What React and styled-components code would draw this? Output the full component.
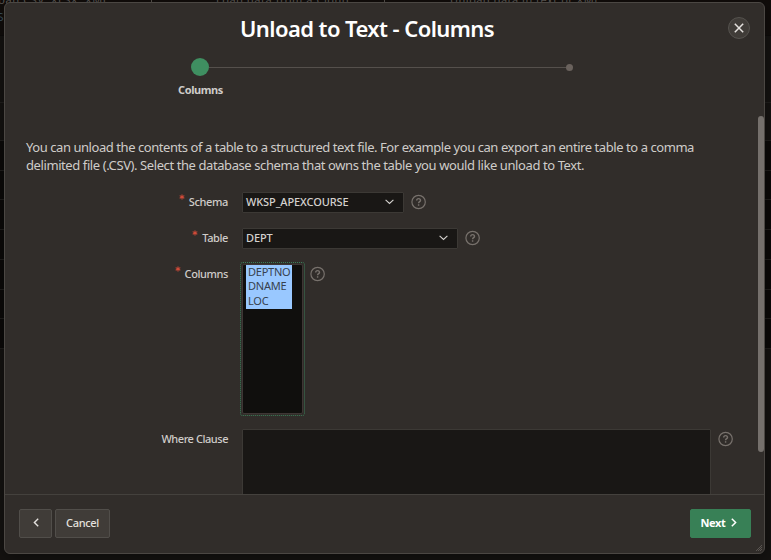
import React from "react";
import styled, { createGlobalStyle } from "styled-components";

const Global = createGlobalStyle`
  * { box-sizing: border-box; }
  html, body { margin: 0; padding: 0; overflow: hidden; }
  body { background: #141210; color: #cfccc9; font-family: "Noto Sans", "Open Sans", sans-serif; font-size: 11px; }
`;

const Screen = styled.div`
  position: relative;
  width: 771px;
  height: 560px;
  overflow: hidden;
  background: #151311;
`;

const Backdrop = styled.div`
  display: flex;
  flex-direction: column;
  height: 560px;
`;

const Cards = styled.div`
  display: grid;
  grid-template-columns: 152px 233px 223px 1fr;
  height: 36px;
  background: #110d0b;
  border-bottom: 1px solid #0d0b0a;
`;

const Card = styled.div`
  height: 36px;
  padding-left: ${(p) => p.$pad}px;
  margin-left: ${(p) => p.$shift || 0}px;
  border-right: ${(p) => (p.$last ? 0 : 1)}px solid #57524d;
  color: #5f5b57;
  font-size: 11px;
  line-height: 17px;
  letter-spacing: ${(p) => p.$ls || 0}px;
  white-space: nowrap;
`;

const CardTitle = styled.div`
  margin-top: -9px;
`;

const CardLink = styled.div`
  padding-left: 2px;
  color: #3c5361;
`;

const BackRow = styled.div`
  height: ${(p) => p.$h}px;
  background: ${(p) => (p.$dark ? "#0c0a09" : "#151311")};
  border-bottom: 1px solid #211f1d;
`;

const Dialog = styled.section`
  position: absolute;
  left: 4px;
  top: 2px;
  width: 761px;
  height: 552px;
  display: flex;
  flex-direction: column;
  background: #312d2a;
  border: 1px solid #4b4743;
  border-radius: 6px;
  overflow: hidden;
  box-shadow: 0 4px 16px rgba(0, 0, 0, 0.4);
`;

const Header = styled.header`
  display: grid;
  grid-template-columns: 1fr 40px;
  align-items: center;
  height: 50px;
  padding: 0 9px 0 5px;
`;

const Title = styled.h1`
  margin: 0 0 1px 9px;
  color: #fff;
  font-size: 22px;
  font-weight: 600;
  line-height: 30px;
  letter-spacing: -0.57px;
  text-align: center;
  white-space: nowrap;
`;

const Close = styled.button`
  justify-self: end;
  display: grid;
  place-items: center;
  width: 22px;
  height: 22px;
  margin-right: 5px;
  padding: 0;
  border: 1px solid #55524e;
  border-radius: 50%;
  background: #403c38;
  color: #e4e1de;
`;

const Wizard = styled.div`
  display: grid;
  grid-template-columns: 18px 357px 7px;
  align-items: center;
  height: 26px;
  margin: 1px 0 0 186px;
`;

const StepDot = styled.span`
  width: ${(p) => (p.$current ? 18 : 7)}px;
  height: ${(p) => (p.$current ? 18 : 7)}px;
  border-radius: 50%;
  background: ${(p) => (p.$current ? "#3f8f61" : "#6a625d")};
`;

const StepLine = styled.span`
  height: 1px;
  background: #55504c;
`;

const StepLabel = styled.div`
  width: 60px;
  margin: 2px 0 0 165.5px;
  color: #cfccc9;
  font-size: 11px;
  font-weight: 700;
  line-height: 16px;
  letter-spacing: -0.4px;
  text-align: center;
`;

const Body = styled.div`
  display: flex;
  flex: 1;
  min-height: 0;
  margin-top: 18px;
  overflow: hidden;
`;

const Content = styled.div`
  width: 753px;
  padding-top: 22px;
`;

const Intro = styled.p`
  margin: 0 0 18px 21px;
  color: #cfccc9;
  font-size: 13px;
  line-height: 18px;
  white-space: nowrap;
`;

const IntroLine = styled.span`
  display: block;
  letter-spacing: ${(p) => p.$ls}px;
`;

const Track = styled.div`
  width: 6px;
`;

const Thumb = styled.div`
  width: 6px;
  height: 336px;
  border-radius: 3px;
  background: #75706c;
`;

const Field = styled.div`
  display: grid;
  grid-template-columns: 223px auto 1fr;
  align-items: start;
  height: ${(p) => p.$h}px;
`;

const Label = styled.label`
  display: flex;
  justify-content: flex-end;
  margin-top: 2px;
  color: #cfccc9;
  font-size: 11px;
  font-weight: 500;
  line-height: 16px;
  letter-spacing: ${(p) => p.$ls}px;
`;

const Star = styled.svg`
  width: 6px;
  height: 6px;
  margin: 0 4px 0 0;
`;

const Select = styled.div`
  display: flex;
  align-items: center;
  justify-content: space-between;
  width: ${(p) => p.$w}px;
  height: 21px;
  margin-left: 14px;
  padding: 0 9px 2px 3px;
  border: 1px solid #3c3935;
  border-radius: 1px;
  background: #191715;
  color: #d4d1ce;
  font-size: 11px;
  font-weight: 500;
  line-height: 17px;
  letter-spacing: ${(p) => p.$ls}px;
`;

const ListBox = styled.div`
  width: 65px;
  height: 154px;
  margin: -2px 0 0 12px;
  padding: 1px;
  border: 1px dotted #3a7d57;
  border-radius: 3px;
`;

const ListInner = styled.div`
  height: 150px;
  padding: 0 0 0 3px;
  border: 1px solid #3e3634;
  border-radius: 2px;
  background: #100f0d;
`;

const Option = styled.div`
  width: 46px;
  height: ${(p) => p.$h}px;
  padding-left: 2px;
  background: #99c8ff;
  color: #37424e;
  font-size: 11px;
  line-height: 14px;
  letter-spacing: ${(p) => p.$ls}px;
`;

const TextArea = styled.div`
  width: 469px;
  height: 90px;
  margin-left: 14px;
  border: 1px solid #3c3935;
  border-radius: 1px;
  background: #191715;
`;

const HelpIcon = styled.svg`
  width: 16px;
  height: 16px;
  margin: 2px 0 0 ${(p) => p.$left || 7}px;
`;

const Footer = styled.footer`
  display: flex;
  align-items: flex-start;
  gap: 3px;
  height: 59px;
  padding: 14px 13px 0 14px;
  border-top: 1px solid #44413d;
`;

const Button = styled.button`
  display: flex;
  align-items: center;
  justify-content: center;
  gap: 5px;
  width: ${(p) => p.$w}px;
  height: 29px;
  margin: 0 0 0 ${(p) => (p.$primary ? "auto" : "0")};
  padding: 0 ${(p) => (p.$primary ? 4 : 0)}px 2px 0;
  border: 1px solid ${(p) => (p.$primary ? "#388056" : "#514e4a")};
  border-radius: 2px;
  background: ${(p) => (p.$primary ? "#388056" : "#403c38")};
  color: ${(p) => (p.$primary ? "#fff" : "#e4e1de")};
  font-family: inherit;
  font-size: 11px;
  font-weight: ${(p) => (p.$primary ? 700 : 500)};
  letter-spacing: -0.35px;
`;

const Grip = styled.svg`
  position: absolute;
  right: 2px;
  bottom: 2px;
  width: 6px;
  height: 6px;
`;

function Help(props) {
  return (
    <HelpIcon viewBox="0 0 16 16" fill="none" stroke="#77716c" {...props}>
      <circle cx="7.6" cy="8" r="6.7" strokeWidth="1.2" />
      <path d="M5.7 6.6C5.7 5.3 6.4 4.6 7.6 4.6s1.9.7 1.9 1.8c0 1.3-1.9 1.3-1.9 2.8" strokeWidth="1.4" />
      <path d="M7.6 10.2v1.5" strokeWidth="1.4" />
    </HelpIcon>
  );
}

function Required() {
  return (
    <Star viewBox="0 0 6 6" stroke="#cf4a38" strokeWidth="1.1">
      <path d="M3 .5v5M.7 1.6l4.6 2.7M.7 4.3l4.6-2.7" />
    </Star>
  );
}

function Chevron({ d, w, h, width = 1.1 }) {
  return (
    <svg width={w} height={h} viewBox={`0 0 ${w} ${h}`} fill="none" stroke="currentColor" strokeWidth={width}>
      <path d={d} />
    </svg>
  );
}

const down = "M.6 .8L4.5 4.5L8.4 .8";

export default function App() {
  return (
    <Screen>
      <Global />
      <Backdrop>
        <Cards>
          <Card $pad={0} $shift={-8} $ls={0.6}>
            <CardTitle>Load CSV, XLSX, XML</CardTitle>
            <CardLink>JSON</CardLink>
          </Card>
          <Card $pad={64} $ls={0.55}><CardTitle>Load data from a Cloud</CardTitle></Card>
          <Card $pad={65} $ls={0.5} $last><CardTitle>Unload data in text or XML</CardTitle></Card>
        </Cards>
        <BackRow $h={67} />
        <BackRow $h={38} />
        <BackRow $h={30} $dark />
        <BackRow $h={29} $dark />
        <BackRow $h={30} $dark />
        <BackRow $h={30} $dark />
        <BackRow $h={30} $dark />
        <BackRow $h={29} $dark />
        <BackRow $h={30} $dark />
      </Backdrop>
      <Dialog>
        <Header>
          <Title>Unload to Text - Columns</Title>
          <Close aria-label="Close">
            <Chevron d="M.8 .8L9.2 9.2M9.2 .8L.8 9.2" w={10} h={10} width={1.5} />
          </Close>
        </Header>
        <Wizard>
          <StepDot $current />
          <StepLine />
          <StepDot />
        </Wizard>
        <StepLabel>Columns</StepLabel>
        <Body>
          <Content>
            <Intro>
              <IntroLine $ls={-0.44}>You can unload the contents of a table to a structured text file. For example you can export an entire table to a comma</IntroLine>
              <IntroLine $ls={-0.41}>delimited file (.CSV). Select the database schema that owns the table you would like unload to Text.</IntroLine>
            </Intro>
            <Field $h={36}>
              <Label $ls={-0.35}><Required />Schema</Label>
              <Select $w={162} $ls={-0.1}>WKSP_APEXCOURSE<Chevron d={down} w={9} h={6} /></Select>
              <Help />
            </Field>
            <Field $h={36}>
              <Label $ls={-0.4}><Required />Table</Label>
              <Select $w={216} $ls={-0.1}>DEPT<Chevron d={down} w={9} h={6} /></Select>
              <Help />
            </Field>
            <Field $h={165}>
              <Label $ls={-0.4}><Required />Columns</Label>
              <ListBox>
                <ListInner>
                  <Option $h={14} $ls={-0.25}>DEPTNO</Option>
                  <Option $h={15} $ls={-0.2}>DNAME</Option>
                  <Option $h={15} $ls={-0.2}>LOC</Option>
                </ListInner>
              </ListBox>
              <Help $left={5} />
            </Field>
            <Field $h={90}>
              <Label $ls={-0.45}>Where Clause</Label>
              <TextArea />
              <Help />
            </Field>
          </Content>
          <Track><Thumb /></Track>
        </Body>
        <Footer>
          <Button $w={33} aria-label="Back"><Chevron d="M5.2 .8L1.4 4.5L5.2 8.2" w={6} h={9} width={1.4} /></Button>
          <Button $w={55}>Cancel</Button>
          <Button $w={61} $primary>Next<Chevron d="M.8 .8L4.6 4.5L.8 8.2" w={6} h={9} width={1.5} /></Button>
        </Footer>
        <Grip viewBox="0 0 6 6" stroke="#77716c" strokeWidth=".6"><path d="M0 6L6 0M2 6L6 2M4 6L6 4" /></Grip>
      </Dialog>
    </Screen>
  );
}
